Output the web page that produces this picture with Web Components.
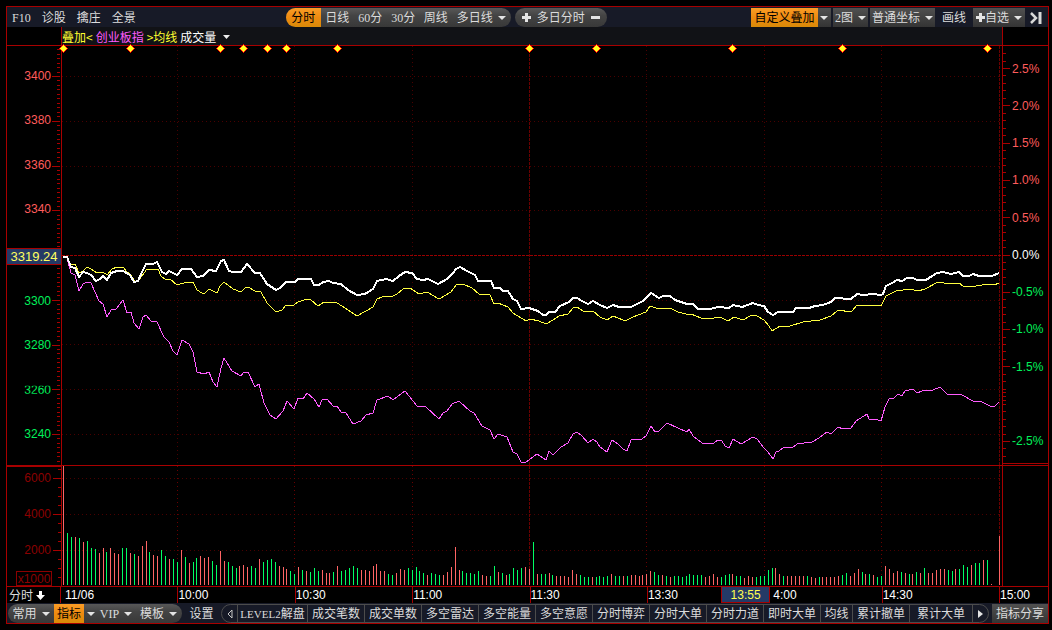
<!DOCTYPE html>
<html lang="zh-CN">
<head>
<meta charset="utf-8">
<title>分时走势</title>
<style>
  html, body { margin: 0; background: #000; }
  body {
    font: 12px/16px "Liberation Sans", "Noto Sans CJK SC", sans-serif;
    color: #dcdcdc;
    --line: #a80000;
    --dim: #8c0000;
    --grid: #4a0000;
    --up: #ff5c5c;
    --down: #00f05a;
    --bar: #171a27;
    --cjk: "Noto Sans CJK SC", sans-serif;
  }
</style>
</head>
<body>
<quote-app></quote-app>

<script>
const define = (name, html, setup) => {
  const template = document.createElement('template');
  template.innerHTML = html;
  customElements.define(name, class extends HTMLElement {
    connectedCallback() {
      if (this.shadowRoot) return;
      this.attachShadow({ mode: 'open' }).append(template.content.cloneNode(true));
      if (setup) setup(this.shadowRoot, this);
    }
  });
};

/* A single toolbar button. Attributes: active, boxed, drop, label. */
define('bar-button', `
  <style>
    :host { display: flex; box-sizing: border-box; }
    button {
      flex: 1; display: flex; align-items: center; justify-content: center; gap: 6px;
      margin: 0; padding: 1px 0 0; border: 0; background: none; cursor: pointer;
      font: inherit; font-family: "Liberation Serif", var(--cjk); color: inherit; white-space: nowrap;
    }
    :host([active]) button { background: linear-gradient(#fb9d26, #ee8a10 50%, #d98a08); color: #000; }
    :host([boxed]) button { background: linear-gradient(#505050, #343434); }
    :host([drop]) button { gap: 5px; }
    svg { display: none; width: 8px; height: 4px; fill: #e4e4e4; flex: none; }
    :host([drop]) svg { display: block; }
  </style>
  <button type="button"><slot></slot><svg viewBox="0 0 8 4" aria-hidden="true"><path d="M0 0h8L4 4z"/></svg></button>
`, (root, host) => {
  const button = root.querySelector('button');
  if (host.hasAttribute('drop')) button.setAttribute('aria-haspopup', 'menu');
  if (host.hasAttribute('label')) button.setAttribute('aria-label', host.getAttribute('label'));
});

/* Rounded holder that joins several buttons. */
define('button-pill', `
  <style>
    :host {
      display: flex; height: 19px; border-radius: 10px; overflow: hidden;
      background: linear-gradient(#585858, #444 40%, #383838);
    }
    ::slotted(bar-button + bar-button) { border-left: 1px solid #303030; }
    ::slotted(bar-button) { flex: none; }
  </style>
  <slot></slot>
`);

define('top-bar', `
  <style>
    :host { display: flex; justify-content: space-between; align-items: center; height: 20px; background: var(--bar); overflow: hidden; }
    div { display: flex; align-items: center; }
    .links { gap: 11px; padding: 0 6px 0 5px; }
    .periods { gap: 4px; }
    .right { gap: 2px; padding-right: 2px; }
    .right bar-button { height: 19px; }
    .w32 { width: 32px; } .w33 { width: 33px; } .w35 { width: 35px; } .w59 { width: 59px; }
    .multi { width: 92px; }
    .multi svg, .add svg { width: 9px; height: 9px; fill: #e4e4e4; }
    .pair { display: flex; }
  </style>
  <div class="links">
    <bar-button>F10</bar-button><bar-button>诊股</bar-button><bar-button>擒庄</bar-button><bar-button>全景</bar-button>
  </div>
  <div class="periods">
    <button-pill>
      <bar-button class="w35" active>分时</bar-button><bar-button class="w33">日线</bar-button><bar-button class="w33">60分</bar-button><bar-button class="w33">30分</bar-button><bar-button class="w32">周线</bar-button><bar-button class="w59" drop>多日线</bar-button>
    </button-pill>
    <button-pill>
      <bar-button class="multi">
        <svg viewBox="0 0 9 9"><path d="M3 0h3v3h3v3H6v3H3V6H0V3h3z"/></svg>
        <span>多日分时</span>
        <svg viewBox="0 0 9 9"><path d="M0 3h9v3H0z"/></svg>
      </bar-button>
    </button-pill>
  </div>
  <div class="right">
    <div class="pair"><bar-button active style="width:67px">自定义叠加</bar-button><bar-button boxed drop label="叠加菜单" style="width:13px"></bar-button></div>
    <bar-button boxed drop style="width:35px">2图</bar-button>
    <bar-button boxed drop style="width:65px">普通坐标</bar-button>
    <bar-button style="width:34px">画线</bar-button>
    <bar-button class="add" boxed drop style="width:52px"><span><svg viewBox="0 0 9 9"><path d="M3 0h3v3h3v3H6v3H3V6H0V3h3z"/></svg>自选</span></bar-button>
    <bar-button label="收起侧栏" style="width:19px"><svg width="12" height="12" viewBox="0 0 12 12" fill="none" stroke="#d8d8d8"><path d="M1 1l5 5-5 5" stroke-width="2.500"/><path d="M10 0v12" stroke-width="3"/></svg></bar-button>
  </div>
`);

define('overlay-legend', `
  <style>
    :host {
      display: flex; align-items: center; gap: 3px; box-sizing: border-box; height: 18px; margin: 0 45px 0 54px; padding-top: 1px;
      border-right: 1px solid var(--line); border-left: 1px solid var(--line);
      background: #111216; color: #fff; font-family: var(--cjk); overflow: hidden;
    }
    .y { color: #ffff30; } .m { color: #ff5cff; }
    svg { margin-left: 4px; }
  </style>
  <span class="y">叠加&lt;</span><span class="m">创业板指</span><span class="y">&gt;均线</span><span>成交量</span>
  <svg width="7" height="4" viewBox="0 0 7 4" fill="#eee"><path d="M0 0h7L3.500 4z"/></svg>
`);

/* Tick marks are generated; labels come from rows that share the height evenly. */
define('price-axis', `
  <style>
    :host { position: relative; display: flex; flex-direction: column; box-sizing: border-box; width: 55px; padding: 8px 0 9px; border-right: 1px solid var(--line); }
    svg { position: absolute; inset: 0; width: 100%; height: 100%; }
    div { position: relative; flex: 1; display: flex; align-items: center; justify-content: flex-end; color: var(--up); }
    span { padding-right: 10px; }
    .down { color: var(--down); }
    .cut span { clip-path: inset(4px 0 4px); }
    .now { padding-top: 4px; }
    .now b {
      flex: 1; height: 15px; line-height: 16px; text-align: center; font-weight: normal; font-size: 13px;
      color: #ffff60; background: #243a66; border: 1px solid var(--line); border-width: 1px 0;
    }
  </style>
  <svg viewBox="7 46 55 419" preserveAspectRatio="none" shape-rendering="crispEdges"><path stroke="#a80000" fill="none" vector-effect="non-scaling-stroke"/></svg>
  <div><span>3400</span></div><div><span>3380</span></div><div><span>3360</span></div><div><span>3340</span></div>
  <div class="now"><b>3319.24</b></div>
  <div class="down"><span>3300</span></div><div class="down"><span>3280</span></div><div class="down cut"><span>3260</span></div><div class="down"><span>3240</span></div>
`, root => {
  let d = '';
  for (let i = -6; i <= 86; i++) {
    const y = Math.floor(76.5 + i * 4.475) + 0.5;
    if (i !== 40) d += `M61 ${y}H${i % 10 === 0 ? 53 : 58}`;
  }
  root.querySelector('path').setAttribute('d', d);
});

define('percent-axis', `
  <style>
    :host { position: relative; display: flex; flex-direction: column; box-sizing: border-box; width: 46px; padding: 4px 0 5px; border-left: 1px solid var(--line); }
    svg { position: absolute; inset: 0; width: 100%; height: 100%; }
    div { flex: 1; display: flex; align-items: center; padding-left: 9px; color: var(--up); }
    .zero { color: #fff; }
    .zero ~ div { color: var(--down); }
  </style>
  <svg viewBox="1003 46 45 419" preserveAspectRatio="none" shape-rendering="crispEdges"><path stroke="#a80000" fill="none" vector-effect="non-scaling-stroke"/></svg>
  <div>2.5%</div><div>2.0%</div><div>1.5%</div><div>1.0%</div><div>0.5%</div><div class="zero">0.0%</div>
  <div>-0.5%</div><div>-1.0%</div><div>-1.5%</div><div></div><div>-2.5%</div>
`, root => {
  let d = 'M1003 463.5H1048';
  for (let i = -2; i <= 52; i++) {
    const y = Math.floor(68.5 + i * 7.46) + 0.5;
    d += `M1003 ${y}H${i % 5 === 0 && i !== 45 ? 1010 : 1006}`;
  }
  for (const y of [392, 396, 400]) d += `M1003 ${y}.5H1006`;
  root.querySelector('path').setAttribute('d', d);
});

define('price-chart', `
  <style>
    :host { display: block; position: relative; min-width: 0; }
    svg { position: absolute; inset: 0; width: 100%; height: 100%; overflow: visible; }
    polyline, path { vector-effect: non-scaling-stroke; fill: none; }
    .dots { stroke: var(--grid); stroke-dasharray: 1 3; }
  </style>
  <svg viewBox="62 46 940 419" preserveAspectRatio="none" shape-rendering="crispEdges" role="img" aria-label="分时走势图">
    <path class="dots" d="M62 76.500H1002M62 121.500H1002M62 166.500H1002M62 210.500H1002M62 300.500H1002M62 344.500H1002M62 389.500H1002M62 434.500H1002M177.500 46V465M294.500 46V465M412.500 46V465M646.500 46V465M764.500 46V465M881.500 46V465"/>
    <path stroke="#6a0000" stroke-dasharray="3 1" d="M529.500 46V465M999.500 46V465"/>
    <path stroke="#9a0000" stroke-dasharray="3 1" d="M62 255.500H1002"/>
    <polyline stroke="#ff5cff" points="63,257 67,258 71,273 75,275 79,291 83,284 87,282 91,283 99,301 103,304 107,317 111,310 116,309 123,300 127,313 131,312 134,323 139,329 143,317 146,315 151,321 157,322 164,337 169,342 173,351 177,355 182,340 189,344 193,352 197,372 204,374 209,372 213,382 217,387 221,368 224,358 232,371 241,376 243,373 248,372 255,387 259,384 264,403 270,415 276,419 283,411 287,401 294,409 298,398 303,399 307,393 314,399 319,407 322,400 327,399 333,406 337,406 341,412 346,413 353,424 361,421 366,415 373,413 377,400 388,396 393,400 405,391 417,406 426,407 439,419 443,413 447,411 452,404 459,401 470,411 474,413 482,426 490,430 494,439 498,434 507,437 513,452 517,454 521,462 526,462 537,454 546,460 549,451 553,455 561,447 568,443 573,434 577,432 582,436 588,443 593,439 597,442 600,447 607,452 612,440 618,444 623,449 627,451 631,440 642,439 646,436 651,426 655,432 659,431 667,423 678,428 687,432 689,429 693,436 702,443 714,443 718,440 722,441 725,446 729,448 733,439 741,444 753,437 757,439 764,448 768,452 773,459 776,452 779,451 784,447 792,448 797,444 812,442 819,438 827,432 831,434 838,427 843,429 851,428 856,421 867,414 869,419 875,419 881,421 885,407 889,399 894,398 898,394 902,396 905,391 913,389 917,393 922,391 933,390 940,387 947,394 962,395 973,401 982,402 990,406 995,406 999,402"/>
    <polyline stroke="#ffff40" points="63,257 67,257 71,265 75,264 79,273 83,271 87,267 91,269 97,273 103,272 107,275 112,269 117,267 123,267 127,272 131,275 135,282 139,280 147,269 158,269 161,276 166,280 170,279 177,285 187,282 193,282 197,290 202,293 205,293 209,289 217,293 220,286 224,282 233,289 241,292 245,288 248,287 255,291 261,292 267,303 276,312 282,310 286,305 294,305 298,302 307,299 311,300 318,306 324,302 337,303 342,306 357,316 373,307 377,299 382,297 393,296 397,294 403,289 410,288 419,294 427,292 439,299 451,292 456,285 463,284 472,288 479,294 490,295 494,304 498,303 508,307 513,313 526,321 530,319 539,321 546,324 553,320 559,316 568,314 573,308 577,307 583,311 588,312 593,311 600,317 607,320 613,316 623,320 627,320 633,317 646,312 650,306 659,309 670,308 678,312 686,314 691,314 701,318 714,318 720,317 728,321 734,317 743,320 752,315 757,316 764,320 769,326 772,331 780,326 790,326 803,322 820,320 831,316 837,311 842,310 847,312 852,311 857,305 881,306 886,296 896,291 910,289 918,291 925,289 938,282 950,284 959,283 963,286 976,286 988,284 994,285 999,283"/>
    <polyline stroke="#fff" stroke-width="2" points="63,257 67,257 71,267 75,268 79,277 83,272 87,273 91,275 96,281 100,279 103,276 107,280 111,273 117,271 123,271 130,275 134,282 138,281 142,272 146,264 153,264 157,262 162,272 166,274 169,271 177,275 182,269 191,269 197,277 203,276 209,270 216,271 221,261 224,260 229,271 233,272 241,272 247,264 255,273 260,273 267,284 276,290 280,288 286,282 295,282 298,279 311,279 314,285 319,285 323,282 329,281 333,283 341,284 348,290 357,295 365,294 373,289 377,281 386,279 393,281 399,276 405,272 412,273 417,279 423,280 428,279 438,284 447,279 453,273 456,269 460,267 467,271 475,275 478,281 491,281 494,288 500,288 503,291 508,291 513,299 517,301 521,309 529,308 538,311 543,315 546,315 549,312 555,312 560,306 569,302 573,298 577,298 582,301 588,304 593,301 600,305 607,308 613,305 619,307 631,307 635,305 643,301 651,293 659,298 663,296 670,296 675,300 687,304 693,304 698,309 710,309 718,307 729,308 733,305 742,307 753,303 758,305 764,306 768,312 773,315 778,312 793,312 796,308 809,308 815,306 823,305 831,302 835,298 851,299 857,294 863,295 873,294 881,295 883,294 886,286 892,283 897,280 902,281 907,278 913,278 917,280 926,280 932,276 937,273 943,272 951,274 959,272 963,276 969,276 973,274 979,276 992,276 999,273"/>
    <g id="marks"></g>
  </svg>
`, root => {
  root.getElementById('marks').innerHTML = [63, 130, 220, 243, 267, 286, 337, 529, 596, 732, 842, 987].map(x =>
    `<path style="fill:#f00" d="M${x} 44h1v1h1v1h1v1h1v1h1v1h-1v1h-1v1h-1v1h-1v1h-1v-1h-1v-1h-1v-1h-1v-1h-1v-1h1v-1h1v-1h1v-1h1z"/>
     <path style="fill:#ffff20" d="M${x} 45h1v1h1v1h1v1h1v1h-1v1h-1v1h-1v1h-1v-1h-1v-1h-1v-1h-1v-1h1v-1h1v-1h1z"/>`).join('');
});

define('volume-axis', `
  <style>
    :host { position: relative; display: flex; flex-direction: column; align-items: flex-end; gap: 20px; box-sizing: border-box; width: 55px; padding-top: 3px; border-right: 1px solid var(--line); border-top: 1px solid var(--line); color: var(--dim); }
    svg { position: absolute; left: 0; top: -1px; width: 54px; height: 120px; }
    span { padding-right: 10px; line-height: 16px; }
    em { box-sizing: border-box; margin: -7px 9px 0 0; width: 36px; height: 15px; line-height: 14px; font-style: normal; text-align: center; border: 1px solid var(--dim); }
  </style>
  <svg viewBox="7 466 54 120" shape-rendering="crispEdges"><path stroke="#a80000" d="M61 469.500H58M61 478.500H53M61 487.500H58M61 496.500H58M61 505.500H58M61 514.500H53M61 523.500H58M61 532.500H58M61 541.500H58M61 550.500H53M61 559.500H58M61 568.500H58M61 577.500H58"/></svg>
  <span>6000</span><span>4000</span><span>2000</span><em>x1000</em>
`);

/* Minute volumes: R = rising, G = falling, followed by the bar height. */
define('volume-chart', `
  <style>
    :host { display: block; position: relative; min-width: 0; }
    svg { position: absolute; inset: 0; width: 100%; height: 100%; }
    path { vector-effect: non-scaling-stroke; fill: none; }
    .dots { stroke: var(--grid); stroke-dasharray: 1 3; }
    .tall { stroke: #6a0000; }
  </style>
  <svg viewBox="62 466 940 120" preserveAspectRatio="none" shape-rendering="crispEdges" role="img" aria-label="成交量">
    <path class="dots" d="M62 478.500H1002M62 514.500H1002M62 550.500H1002"/>
    <path class="dots tall" d="M177.500 466V586M294.500 466V586M412.500 466V586M646.500 466V586M764.500 466V586M881.500 466V586"/>
    <path stroke="#6a0000" stroke-dasharray="3 1" d="M529.500 466V586M999.500 466V586"/>
    <path id="R" stroke="#ff6464"/><path id="G" stroke="#00ff64"/>
  </svg>
`, root => {
  const volumes = `R119 G52 G48 R48 G47 R43 G44 G37 G36 R32 R37 G33 R37 R32 R31 G37 G37 R32 G31 R29 R39 R44 G33 R30 R29 G35 G29 R26 G26 G23
    R35 G28 R22 G23 G27 R29 R27 R28 G24 G20 R34 R24 G23 G19 G17 R19 R20 R18 G19 G17 R26 G23 G25 G26 G23 R19 R18 R16 G14 G11
    R18 G15 R14 G13 G17 G14 R15 R12 R12 G13 R19 G14 G15 G17 G19 G17 R15 R15 R14 R19 R21 R14 R14 G11 G10 R12 R16 R15 G17 G15
    G18 G14 G12 R10 G12 G11 G10 R10 R13 R18 R38 R15 G14 G12 G12 G11 G14 R10 R9 G9 G19 R13 G12 R10 G11 G17 G15 G17 R18 R16
    G43 R11 G11 G11 R12 G10 R9 R9 R9 R8 R15 R11 G10 G8 G8 R8 G8 G9 G8 G9 R11 G9 G9 R9 G9 R10 R10 R9 R10 R11
    R14 G13 G10 R10 G9 R8 G9 G9 G8 G9 G11 G10 G10 G10 R8 R9 R11 R8 G8 G10 G11 R11 G9 G9 R7 R9 R8 G8 G9 G9
    G15 G17 R17 R11 G9 R9 R9 R9 R9 R9 G9 R8 R7 G8 R8 R8 R8 R8 R9 G10 G12 R9 R12 R16 G13 R11 G11 R10 G8 G9
    R19 R16 R12 R14 G13 R12 G11 R11 G13 R12 G17 R12 R12 R15 R16 R16 G15 G14 R16 G16 G20 G18 R20 G22 G22 R25 G25 R1 R0 R49`.trim().split(/\s+/);
  const d = { R: '', G: '' };
  volumes.forEach((v, i) => {
    const x = Math.floor(60 + 3.9125 * (i + 1)) + 0.5;
    if (+v.slice(1)) d[v[0]] += `M${x} 585V${585 - v.slice(1)}`;
  });
  for (const k in d) root.getElementById(k).setAttribute('d', d[k]);
});

define('time-axis', `
  <style>
    :host { display: flex; height: 16px; color: #fff; position: relative; }
    button { width: 53px; flex: none; display: flex; align-items: center; gap: 3px; margin: 0; padding: 0 0 0 2px; border: 0; background: none; color: #dcdcdc; font: inherit; font-family: var(--cjk); }
    .times { flex: 1; display: grid; grid-template-columns: repeat(8, 1fr); position: relative; }
    .times span, .end { border-left: 1px solid var(--line); line-height: 16px; }
    .times span:first-child { padding-left: 4px; }
    .times .after { padding-left: 8px; }
    .end { width: 48px; flex: none; }
    b { position: absolute; left: 70.4%; top: 0; width: 47px; height: 15px; line-height: 16px; border: 1px solid var(--line); border-top: 0; background: #243a66; color: #ffff50; font-weight: normal; text-align: center; }
  </style>
  <button type="button">分时<svg width="9" height="9" viewBox="0 0 9 9" fill="#fff"><path d="M3 0h3v4h3L4.500 9 0 4h3z"/></svg></button>
  <div class="times">
    <span>11/06</span><span>10:00</span><span>10:30</span><span>11:00</span><span>11:30</span><span>13:30</span><span class="after">4:00</span><span>14:30</span>
    <b>13:55</b>
  </div>
  <div class="end">15:00</div>
`);

define('bottom-bar', `
  <style>
    :host { display: flex; align-items: center; height: 20px; background: var(--bar); overflow: hidden; }
    button-pill { flex: none; margin-left: 1px; }
    .set { width: 39px; flex: none; }
    nav { display: flex; box-sizing: border-box; height: 19px; border: 1px solid #4c4c4c; border-radius: 10px; overflow: hidden; flex: none; }
    nav bar-button { width: 57px; flex: none; }
    nav bar-button + bar-button { border-left: 1px solid #4c4c4c; }
    nav .prev { width: 15px; } nav .next { width: 16px; } nav .first { width: 70px; font-size: 11px; } nav .short { width: 32px; } nav .wide { width: 63px; }
    .first span { font-size: 12px; }
    .share { width: 56px; height: 19px; margin-left: auto; flex: none; }
  </style>
  <button-pill>
    <bar-button drop style="width:46px">常用</bar-button><bar-button active style="width:30px">指标</bar-button><bar-button drop label="指标菜单" style="width:13px"></bar-button><bar-button drop style="width:38px">VIP</bar-button><bar-button drop style="width:47px">模板</bar-button>
  </button-pill>
  <bar-button class="set">设置</bar-button>
  <nav aria-label="指标">
    <bar-button class="prev" label="向前"><svg width="6" height="10" viewBox="0 0 6 10" fill="none" stroke="#c8c8c8"><path d="M5 1v8L1 5z"/></svg></bar-button>
    <bar-button class="first"><div>LEVEL2<span>解盘</span></div></bar-button><bar-button>成交笔数</bar-button><bar-button>成交单数</bar-button><bar-button>多空雷达</bar-button><bar-button>多空能量</bar-button><bar-button>多空意愿</bar-button><bar-button>分时博弈</bar-button><bar-button>分时大单</bar-button><bar-button>分时力道</bar-button><bar-button>即时大单</bar-button><bar-button class="short">均线</bar-button><bar-button>累计撤单</bar-button><bar-button class="wide">累计大单</bar-button>
    <bar-button class="next" label="向后"><svg width="5" height="8" viewBox="0 0 5 8" fill="#e4e4e4"><path d="M0 0v8l5-4z"/></svg></bar-button>
  </nav>
  <bar-button class="share" boxed>指标分享</bar-button>
`);

define('quote-app', `
  <style>
    :host { display: flex; box-sizing: border-box; min-height: 100vh; padding: 6px 3px 6px 6px; }
    main { flex: 1; min-width: 0; display: flex; flex-direction: column; border: 1px solid var(--line); }
    section { display: flex; border-top: 1px solid var(--line); }
    .price { flex: 1; min-height: 240px; }
    .volume { height: 120px; border-bottom: 1px solid var(--line); }
    price-chart, volume-chart { flex: 1; }
    .blank { width: 45px; border-left: 1px solid var(--line); }
  </style>
  <main>
    <top-bar></top-bar>
    <overlay-legend></overlay-legend>
    <section class="price"><price-axis></price-axis><price-chart></price-chart><percent-axis></percent-axis></section>
    <section class="volume"><volume-axis></volume-axis><volume-chart></volume-chart><div class="blank"></div></section>
    <time-axis></time-axis>
    <bottom-bar></bottom-bar>
  </main>
`);
</script>
</body>
</html>
